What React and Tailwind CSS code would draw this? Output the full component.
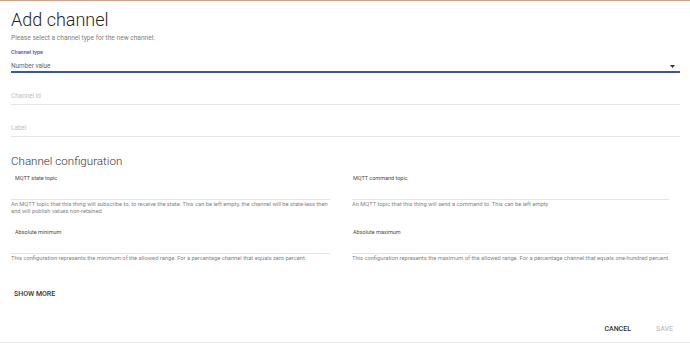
import React from "react";

function ConfigField({ label, desc, right }) {
  return (
    <div className="flex flex-col">
      <div className={`${right ? "pl-[1px]" : "pl-[4px]"} text-[5.5px] leading-[7px] text-[#4a4a4a]`}>{label}</div>
      <div className="h-[18px] border-b border-[#e6e6e6]" />
      <div className={`${right ? "whitespace-nowrap" : ""} pt-[1px] text-[5.75px] leading-[7px] text-[#858585]`}>{desc}</div>
    </div>
  );
}

function App() {
  return (
    <div className="w-[690px] h-[343px] bg-white border-t border-[#d9a184] flex flex-col font-['Roboto',sans-serif] overflow-hidden">
      <div className="pl-[11px] pr-[10px]">
        <h1 className="mt-[7px] h-[25px] leading-[24px] text-[18px] font-light text-[#262626]">Add channel</h1>
        <p className="h-[11px] leading-[11px] text-[6.6px] text-[#808080]">Please select a channel type for the new channel:</p>

        <div className="mt-[4px] h-[8px] leading-[8px] text-[5.5px] font-medium text-[#3f51b5]">Channel type</div>
        <div className="flex items-center justify-between pt-[5px] border-b-2 border-[#3f51b5]">
          <span className="leading-[10px] text-[6.4px] text-[#666]">Number value</span>
          <svg width="5" height="3" viewBox="0 0 5 3" className="mr-[5px]">
            <polygon points="0,0 5,0 2.5,3" fill="#333" />
          </svg>
        </div>

        <div className="mt-[18px] pb-[3px] border-b border-[#e6e6e6] leading-[10px] text-[6.4px] text-[#c2c2c2]">Channel id</div>
        <div className="mt-[18px] pb-[3px] border-b border-[#e6e6e6] leading-[10px] text-[6.4px] text-[#c2c2c2]">Label</div>

        <h2 className="mt-[17px] h-[14px] leading-[14px] text-[11.6px] font-light text-[#333]">Channel configuration</h2>

        <div className="mt-[7px] grid grid-cols-[319px_317px] gap-x-[22px] gap-y-[14px]">
          <ConfigField
            label="MQTT state topic"
            desc="An MQTT topic that this thing will subscribe to, to receive the state. This can be left empty, the channel will be state-less then and will publish values non-retained."
          />
          <ConfigField
            right
            label="MQTT command topic"
            desc="An MQTT topic that this thing will send a command to. This can be left empty"
          />
          <ConfigField
            label="Absolute minimum"
            desc="This configuration represents the minimum of the allowed range. For a percentage channel that equals zero percent."
          />
          <ConfigField
            right
            label="Absolute maximum"
            desc="This configuration represents the maximum of the allowed range. For a percentage channel that equals one-hundred percent."
          />
        </div>

        <button className="mt-[28px] ml-[3px] h-[9px] leading-[9px] text-[7px] font-medium text-[#333]">SHOW MORE</button>
      </div>

      <div className="mt-auto flex justify-end gap-[25px] pr-[17px] pb-[8px] border-b border-[#e6e6e6]">
        <button className="leading-[9px] text-[7px] font-medium text-[#333]">CANCEL</button>
        <button className="leading-[9px] text-[7px] font-medium text-[#c2c2c2]">SAVE</button>
      </div>
    </div>
  );
}

export default App;
